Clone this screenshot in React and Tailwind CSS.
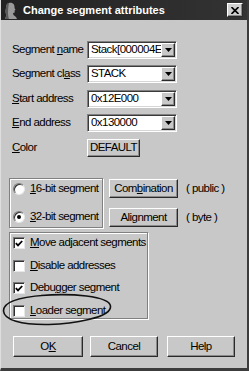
import React from 'react';

// accelerator label: underlines one character
function Acc({ text, at }) {
    if (at == null || at < 0) return <span>{text}</span>;
    return (
        <span>
            {text.slice(0, at)}
            <span className="underline underline-offset-[1px] decoration-1">{text[at]}</span>
            {text.slice(at + 1)}
        </span>
    );
}

const raised = "bg-[#c8c8c8] border border-t-white border-l-white border-r-[#2a2a2a] border-b-[#2a2a2a] shadow-[inset_-1px_-1px_0_#8a8a8a]";

function Button({ className, children }) {
    return (
        <div className={`${raised} flex items-center justify-center ${className}`}>
            {children}
        </div>
    );
}

function Combo({ value, className = "" }) {
    return (
        <div className={`w-[90px] h-[18px] bg-white flex items-center border border-t-[#808080] border-l-[#808080] border-r-white border-b-white shadow-[inset_1px_1px_0_#3a3a3a,inset_-1px_-1px_0_#d6d6d6] ${className}`}>
            <div className="flex-1 overflow-hidden whitespace-nowrap pl-[3px] leading-none">{value}</div>
            <div className={`${raised} w-[14px] h-[14px] mr-[1px] flex items-center justify-center`}>
                <svg width="7" height="4" viewBox="0 0 7 4"><path d="M0 0h7L3.5 4z" fill="#000" /></svg>
            </div>
        </div>
    );
}

function Radio({ checked }) {
    return (
        <div className="w-[12px] h-[12px] rounded-full bg-white border border-t-[#7a7a7a] border-l-[#7a7a7a] border-r-[#e8e8e8] border-b-[#e8e8e8] shadow-[inset_1px_1px_0_#303030] flex items-center justify-center">
            {checked && <div className="w-[4px] h-[4px] rounded-full bg-black" />}
        </div>
    );
}

function Check({ checked }) {
    return (
        <div className="w-[12px] h-[12px] bg-white border border-t-[#7a7a7a] border-l-[#7a7a7a] border-r-[#e8e8e8] border-b-[#e8e8e8] shadow-[inset_1px_1px_0_#303030] flex items-center justify-center">
            {checked && (
                <svg width="8" height="7" viewBox="0 0 8 7">
                    <path d="M0.8 3.2 L3 5.4 L7.2 1" stroke="#000" strokeWidth="1.8" fill="none" />
                </svg>
            )}
        </div>
    );
}

const fields = [
    { label: "Segment name", at: 8, value: "Stack[000004E0]" },
    { label: "Segment class", at: 10, value: "STACK" },
    { label: "Start address", at: 0, value: "0x12E000" },
    { label: "End address", at: 0, value: "0x130000" },
];

const checks = [
    { label: "Move adjacent segments", at: 0, checked: true },
    { label: "Disable addresses", at: 0, checked: false },
    { label: "Debugger segment", at: 4, checked: true },
    { label: "Loader segment", at: 0, checked: false },
];

export default function App() {
    return (
        <div className="w-[249px] h-[371px] bg-[#c8c8c8] relative overflow-hidden text-black text-[11.5px] tracking-[-0.55px] font-['Liberation_Sans',Arial,sans-serif] border-l border-l-[#dedede] border-r-2 border-r-[#3c3c3c] border-b-[3px] border-b-[#3c3c3c]">
            {/* title bar */}
            <div className="h-[20px] bg-gradient-to-r from-[#222] to-[#333] flex items-center pl-[2px] pr-[4px]">
                <svg width="16" height="17" viewBox="0 0 16 17">
                    <path d="M6 1 C10 0 12 3 11.5 6 L12.5 8 L11.5 8.5 L11.8 10.5 L10 11 L10.5 13 L13 15 L14 17 L2 17 L3.5 13 C2 11 2.5 8 3 6 C3 3 4 1.5 6 1 Z" fill="#9a9a9a" />
                    <path d="M6 1 C4 1.5 3 3 3 6 C2.5 8 2 11 3.5 13 L2 17 L6 17 C5 14 4.5 9 6 1 Z" fill="#5a5a5a" />
                </svg>
                <div className="ml-[4px] text-white font-bold text-[11px] tracking-normal leading-none">Change segment attributes</div>
                <div className={`${raised} ml-auto w-[16px] h-[14px] flex items-center justify-center bg-[#d0d0d0]`}>
                    <svg width="8" height="7" viewBox="0 0 8 7">
                        <path d="M0.5 0 L7.5 7 M7.5 0 L0.5 7" stroke="#000" strokeWidth="1.6" />
                    </svg>
                </div>
            </div>

            <div className="pl-[8px]">
                {/* fields */}
                <div className="mt-[21px] flex flex-col gap-[7.5px]">
                    {fields.map((f) => (
                        <div key={f.label} className="flex items-center h-[17px]">
                            <div className="w-[78px] pl-[3px] whitespace-nowrap"><Acc text={f.label} at={f.at} /></div>
                            <Combo value={f.value} />
                        </div>
                    ))}
                    <div className="flex items-center h-[18px]">
                        <div className="w-[78px] pl-[3px]"><Acc text="Color" at={0} /></div>
                        <Button className="w-[53px] h-[18px]">DEFAULT</Button>
                    </div>
                </div>

                {/* segment bitness + combination/alignment */}
                <div className="mt-[21px] flex">
                    <div className="w-[94px] h-[50px] border border-[#808080] shadow-[inset_1px_1px_0_#fff,1px_1px_0_#fff] flex flex-col pl-[3px] pt-[4px] gap-[16px]">
                        <div className="flex items-center gap-[5px] h-[12px]"><Radio /><Acc text="16-bit segment" at={0} /></div>
                        <div className="flex items-center gap-[5px] h-[12px]"><Radio checked /><Acc text="32-bit segment" at={0} /></div>
                    </div>
                    <div className="ml-[6px] mt-[1px] flex flex-col gap-[10px]">
                        <div className="flex items-center">
                            <Button className="w-[69px] h-[19px]"><Acc text="Combination" at={3} /></Button>
                            <span className="ml-[8px] whitespace-nowrap">( public )</span>
                        </div>
                        <div className="flex items-center">
                            <Button className="w-[69px] h-[19px]"><Acc text="Alignment" at={3} /></Button>
                            <span className="ml-[8px] whitespace-nowrap">( byte )</span>
                        </div>
                    </div>
                </div>

                {/* flags */}
                <div className="mt-[4px] w-[139px] h-[87px] border border-[#808080] shadow-[inset_1px_1px_0_#fff,1px_1px_0_#fff] flex flex-col pl-[3px] pt-[4px] gap-[10.5px]">
                    {checks.map((c) => (
                        <div key={c.label} className="flex items-center gap-[5px] h-[12px] whitespace-nowrap">
                            <Check checked={c.checked} />
                            <Acc text={c.label} at={c.at} />
                        </div>
                    ))}
                </div>

                {/* dialog buttons */}
                <div className="mt-[17px] ml-[4px] flex">
                    <Button className="w-[70px] h-[21px]"><Acc text="OK" at={1} /></Button>
                    <Button className="ml-[7px] w-[68px] h-[21px]">Cancel</Button>
                    <Button className="ml-[9px] w-[68px] h-[21px]">Help</Button>
                </div>
            </div>

            {/* hand-drawn annotation around "Loader segment" */}
            <svg className="absolute left-0 top-[292px]" width="116" height="36" viewBox="0 0 116 36">
                <path d="M40 3.5 C70 1 108 4 109.5 14 C111 26 70 32 48 32.5 C20 33 3 28 2.5 19 C2 10 18 5 44 3.2" stroke="#111" strokeWidth="1.6" fill="none" />
            </svg>
        </div>
    );
}
